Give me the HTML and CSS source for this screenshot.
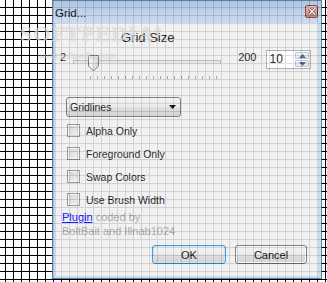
FILE: index.html
```html
<!DOCTYPE html>
<html lang="en">
<head>
    <meta charset="UTF-8">
    <meta name="viewport" content="width=device-width, initial-scale=1.0">
    <title>Grid...</title>
    <link rel="stylesheet" href="styles.css">
</head>
<body>
    <div class="dialog">
        <div class="titlebar">
            <span class="title">Grid...</span>
            <span class="close-btn">
                <svg width="8" height="7" viewBox="0 0 8 7"><path d="M1 0.5 L7 6.5 M7 0.5 L1 6.5" stroke="#5a2a24" stroke-width="2.6"/><path d="M1 0.5 L7 6.5 M7 0.5 L1 6.5" stroke="#ffffff" stroke-width="1.4"/></svg>
            </span>
        </div>

        <div class="client">
            <div class="caption">Grid Size</div>

            <div class="size-row">
                <span class="range-label range-min">2</span>
                <div class="slider">
                    <div class="track"></div>
                    <div class="ticks"></div>
                    <svg class="thumb" width="11" height="17" viewBox="0 0 11 17">
                        <defs>
                            <linearGradient id="thumbFill" x1="0" y1="0" x2="1" y2="0">
                                <stop offset="0" stop-color="#f6f6f6"/>
                                <stop offset="1" stop-color="#d4d4d4"/>
                            </linearGradient>
                        </defs>
                        <path d="M0.5 1.5 Q0.5 0.5 1.5 0.5 H9.5 Q10.5 0.5 10.5 1.5 V11 L5.5 16 L0.5 11 Z" fill="url(#thumbFill)" stroke="#6f6f6f"/>
                    </svg>
                </div>
                <span class="range-label range-max">200</span>
                <div class="spin">
                    <span class="spin-value">10</span>
                    <div class="spin-buttons">
                        <span class="spin-btn"><svg width="7" height="4" viewBox="0 0 7 4"><path d="M0 4 L3.5 0 L7 4 Z" fill="#4a5f86"/></svg></span>
                        <span class="spin-btn"><svg width="7" height="4" viewBox="0 0 7 4"><path d="M0 0 L3.5 4 L7 0 Z" fill="#4a5f86"/></svg></span>
                    </div>
                </div>
            </div>

            <div class="combo">
                <span class="combo-text">Gridlines</span>
                <svg class="combo-arrow" width="7" height="4" viewBox="0 0 7 4"><path d="M0 0 H7 L3.5 4 Z" fill="#000"/></svg>
            </div>

            <div class="checks">
                <div class="check"><span class="box"></span><span>Alpha Only</span></div>
                <div class="check"><span class="box"></span><span>Foreground Only</span></div>
                <div class="check"><span class="box"></span><span>Swap Colors</span></div>
                <div class="check"><span class="box"></span><span>Use Brush Width</span></div>
            </div>

            <div class="credit"><a class="link" href="#">Plugin</a> coded by<br>BoltBait and Illnab1024</div>

            <div class="buttons">
                <button class="btn btn-default">OK</button>
                <button class="btn">Cancel</button>
            </div>
        </div>
    </div>

    <div class="watermark">
        <div class="wm-big">SOFTPEDIA<sup>®</sup></div>
        <div class="wm-small">www.softpedia.com</div>
    </div>
</body>
</html>
```

FILE: styles.css
```css
body {
    margin: 0;
    width: 327px;
    height: 282px;
    overflow: hidden;
    position: relative;
    font-family: "Liberation Sans", Arial, sans-serif;
    color: #111111;
    background-color: #ffffff;
    background-image:
        linear-gradient(to right, #000000 1.5px, transparent 1.5px),
        linear-gradient(to bottom, #000000 1.5px, transparent 1.5px);
    background-size: 8px 8px;
    background-position: 5px 7px;
}

.dialog {
    position: absolute;
    left: 52px;
    top: 0;
    width: 268px;
    height: 277px;
    border: 1px solid #4f6f92;
    background: #c4d8ee;
    opacity: 0.88;
    display: flex;
    flex-direction: column;
}

.titlebar {
    height: 22px;
    flex-shrink: 0;
    display: flex;
    align-items: center;
    justify-content: space-between;
    padding: 0 3px 0 2px;
    background: linear-gradient(to bottom, #a4bfdf, #bad0e9 60%, #c6d9ee);
}

.title {
    font-size: 11.5px;
    color: #000000;
    margin-top: 1px;
}

.close-btn {
    width: 11px;
    height: 11px;
    border: 1px solid #7a3a32;
    border-radius: 2px;
    background: linear-gradient(to bottom, #e8b4aa, #c8776a);
    display: flex;
    align-items: center;
    justify-content: center;
    margin-top: -1px;
}

.client {
    flex: 1;
    margin: 0 3px 2px 3px;
    background: #f0f0f0;
    padding-top: 7px;
}

.caption {
    font-size: 13px;
    line-height: 16px;
    margin-left: 65px;
}

.size-row {
    display: flex;
    align-items: flex-start;
    margin-top: 4px;
}

.range-label {
    font-size: 11px;
    line-height: 14px;
}

.range-min {
    margin-left: 4px;
}

.range-max {
    margin-left: 10px;
}

.slider {
    position: relative;
    width: 158px;
    height: 30px;
    margin-left: 4px;
}

.track {
    margin: 10px 0 0 3px;
    width: 146px;
    height: 2px;
    border: 1px solid #b8b8b8;
    border-bottom-color: #e6e6e6;
    background: #e4e4e4;
}

.ticks {
    margin: 12px 0 0 20px;
    width: 127px;
    height: 3px;
    background-image: linear-gradient(to right, #9a9a9a 1px, transparent 1px);
    background-size: 7px 3px;
}

.thumb {
    position: absolute;
    left: 18px;
    top: 5px;
}

.spin {
    width: 43px;
    height: 17px;
    margin-left: 10px;
    border: 1px solid #a9a9a9;
    background: #ffffff;
    display: flex;
    justify-content: space-between;
}

.spin-value {
    font-size: 12px;
    line-height: 17px;
    margin-left: 2px;
}

.spin-buttons {
    width: 14px;
    display: flex;
    flex-direction: column;
    margin: 1px 1px 1px 0;
    gap: 1px;
}

.spin-btn {
    flex: 1;
    display: flex;
    align-items: center;
    justify-content: center;
    border: 1px solid #b7c2d3;
    border-radius: 1px;
    background: linear-gradient(to bottom, #f4f6f9, #dde4ee);
}

.combo {
    width: 113px;
    height: 18px;
    margin: 17px 0 0 10px;
    border: 1px solid #707070;
    border-radius: 3px;
    background: linear-gradient(to bottom, #f3f3f3, #ebebeb 49%, #dddddd 51%, #d0d0d0);
    display: flex;
    align-items: center;
    justify-content: space-between;
}

.combo-text {
    font-size: 10.5px;
    margin-left: 3px;
}

.combo-arrow {
    margin-right: 4px;
}

.checks {
    display: flex;
    flex-direction: column;
    gap: 10px;
    margin: 7px 0 0 11px;
}

.check {
    display: flex;
    align-items: center;
    height: 13px;
    font-size: 10.5px;
}

.box {
    width: 11px;
    height: 11px;
    border: 1px solid #8e8f8f;
    background: linear-gradient(135deg, #c9ced4, #f2f3f4);
    box-shadow: inset 0 0 0 1px #f4f4f4;
    margin-right: 6px;
}

.credit {
    font-size: 11px;
    line-height: 14px;
    color: #a3a3a3;
    margin: 4px 0 0 6px;
}

.link {
    color: #0000ff;
    text-decoration: underline;
}

.buttons {
    display: flex;
    justify-content: flex-end;
    gap: 9px;
    margin: 7px 11px 0 0;
}

.btn {
    width: 72px;
    height: 19px;
    padding: 0;
    font-family: "Liberation Sans", Arial, sans-serif;
    font-size: 11px;
    color: #000000;
    border: 1px solid #707070;
    border-radius: 3px;
    background: linear-gradient(to bottom, #f2f2f2, #ebebeb 49%, #dddddd 51%, #cfcfcf);
    box-shadow: inset 0 0 0 1px #fafafa;
}

.btn-default {
    width: 74px;
    border-color: #3c8ccf;
    box-shadow: inset 0 0 0 1px #c3e6f8;
}

.watermark {
    position: absolute;
    left: 20px;
    top: 20px;
    color: rgba(255, 255, 255, 0.6);
    pointer-events: none;
}

.wm-big {
    font-family: "Liberation Serif", serif;
    font-weight: bold;
    font-size: 22px;
    letter-spacing: 1px;
    line-height: 22px;
    text-shadow: 0 0 1px rgba(0, 0, 0, 0.25);
}

.wm-big sup {
    font-size: 8px;
}

.wm-small {
    font-family: "Liberation Sans", Arial, sans-serif;
    font-size: 9px;
    margin: 6px 0 0 18px;
    text-shadow: 0 0 1px rgba(0, 0, 0, 0.25);
}
```
